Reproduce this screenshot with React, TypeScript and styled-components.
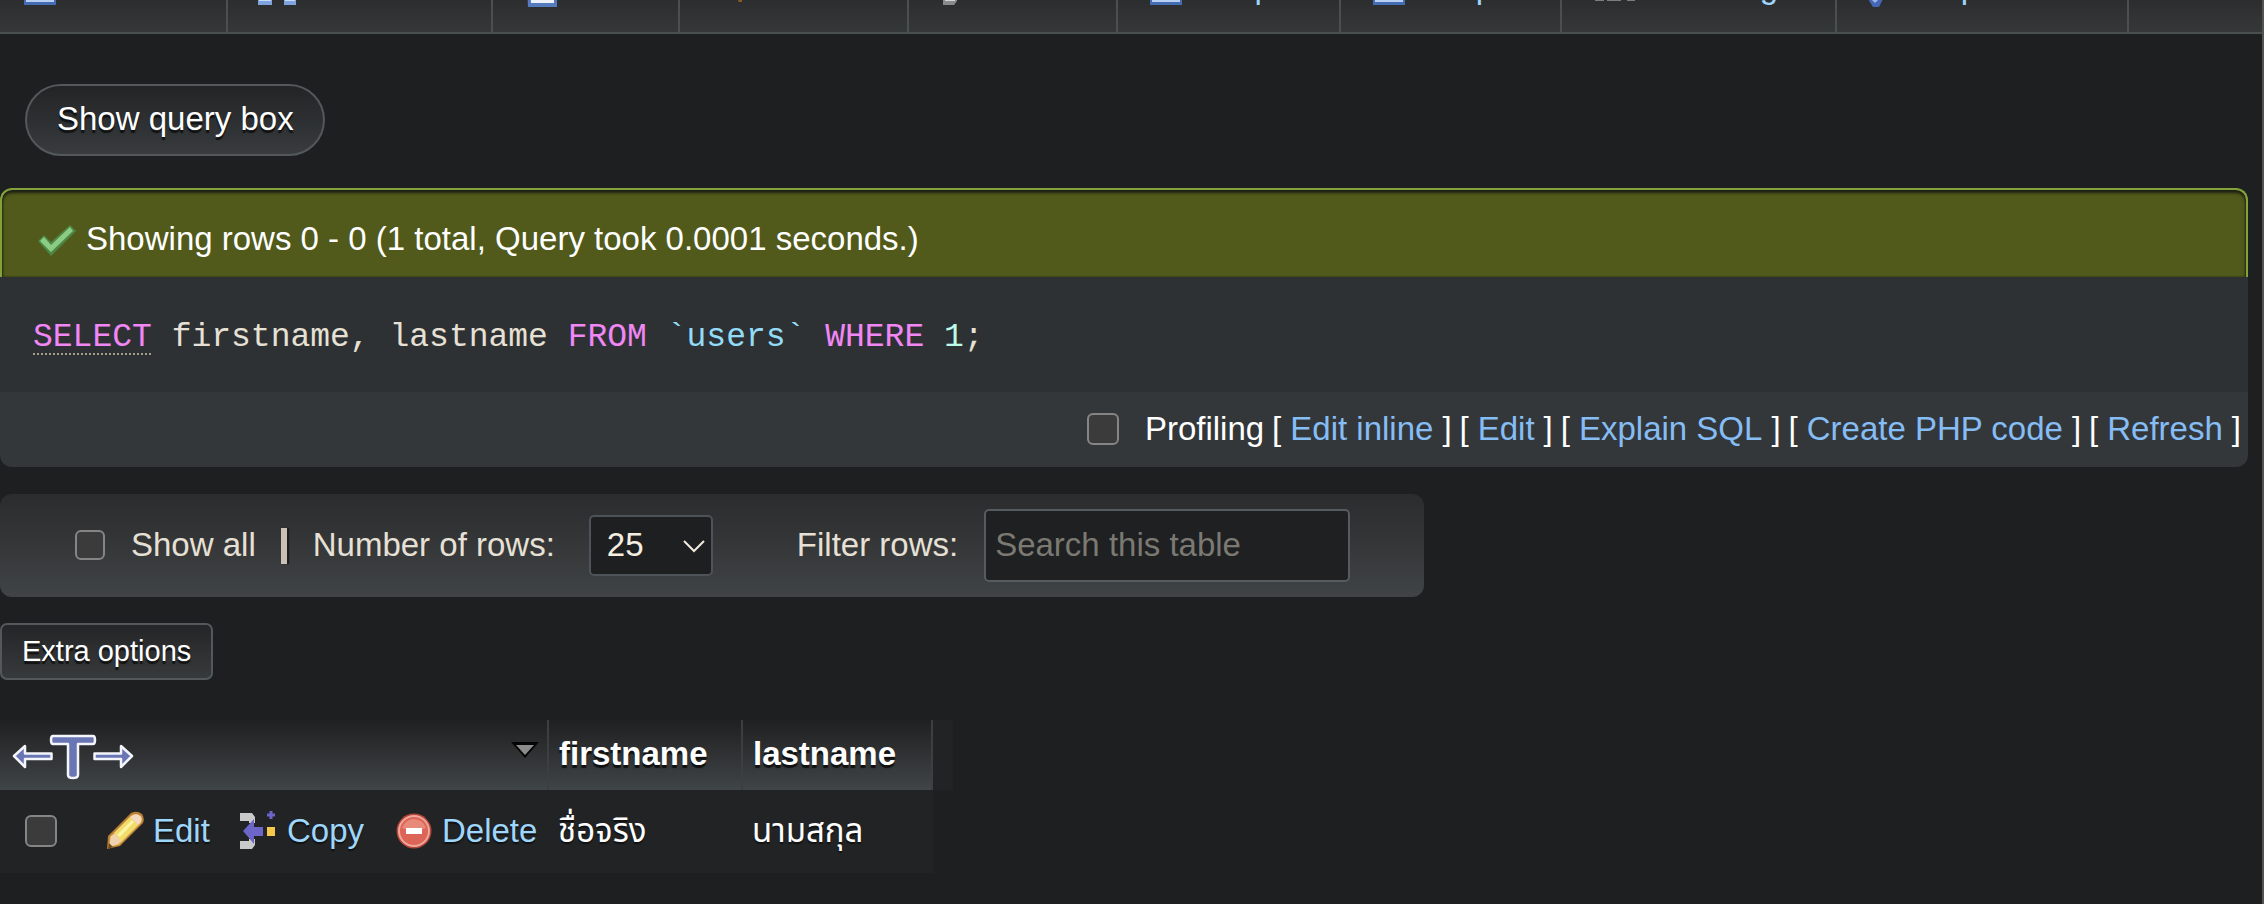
import React from "react";
import styled, { createGlobalStyle } from "styled-components";

const GlobalStyle = createGlobalStyle`
  *, *::before, *::after { box-sizing: border-box; }
  body {
    margin: 0;
    background: #1e1f21;
    color: #ffffff;
    font-family: "Liberation Sans", Arial, "Noto Sans Thai", "Noto Sans", sans-serif;
    font-size: 33px;
    line-height: 40px;
  }
  button, input, select { font: inherit; color: inherit; }
`;

const Page = styled.div`
  min-height: 100vh;
  border-right: 2px solid #555351;
`;

const TabBar = styled.nav`
  display: flex;
  align-items: flex-end;
  height: 34px;
  overflow: hidden;
  background: linear-gradient(#2c2d2f, #353839);
  border-bottom: 2px solid #4a504f;
`;

const Tab = styled.a<{ $width: number; $first?: boolean }>`
  display: flex;
  flex: 0 0 ${(p) => p.$width}px;
  align-items: center;
  gap: 32px;
  height: 90px;
  padding: 25px 0 25px ${(p) => (p.$first ? 22 : 30)}px;
  border-right: 2px solid #4b4f50;
  color: #9fd4fb;
  text-decoration: none;
  white-space: nowrap;
  svg { flex: none; }
`;

const Main = styled.main`
  display: flex;
  flex-direction: column;
  align-items: flex-start;
  padding: 50px 14px 30px 0;
`;

const PillButton = styled.button`
  height: 72px;
  margin: 0 0 32px 25px;
  padding: 0 29px 2px 30px;
  border: 2px solid #53585b;
  border-radius: 36px;
  background: linear-gradient(#232426, #2f3234 60%, #393b3d);
  color: #ffffff;
  text-shadow: 0 3px 1px #111111;
`;

const Result = styled.section`
  width: 100%;
  margin-bottom: 27px;
`;

const SuccessMessage = styled.div`
  display: flex;
  align-items: center;
  gap: 8px;
  padding: 29px 34px 18px;
  border: 2px solid #83a33a;
  border-bottom: 0;
  border-radius: 12px 12px 0 0;
  background: #515a1a;
  box-shadow: inset 0 3px 3px #1e1f14, inset 1px 0 2px #333a14, inset -1px 0 2px #333a14;
`;

const Query = styled.pre`
  margin: 0;
  padding: 41px 33px 34px;
  background: #2e3134;
  color: #e7e1d5;
  font-family: "Liberation Mono", "Courier New", monospace;
`;

const Keyword = styled.span`
  color: #f087f5;
`;

const DocLink = styled.a`
  color: #f087f5;
  text-decoration: underline dotted 2px #a39d8a;
  text-underline-offset: 7px;
`;

const Identifier = styled.span`
  color: #93dcf8;
`;

const NumberLiteral = styled.span`
  color: #bdfbe9;
`;

const QueryTools = styled.div`
  display: flex;
  align-items: center;
  justify-content: flex-end;
  gap: 8px;
  height: 75px;
  padding: 0 7px 2px 0;
  border-radius: 0 0 12px 12px;
  background: #34373a;
`;

const Bracketed = styled.span`
  display: flex;
  gap: 9px;
`;

const ToolLink = styled.a`
  color: #85bdf4;
  text-decoration: none;
`;

const CheckLabel = styled.label`
  display: flex;
  align-items: center;
  gap: 26px;
`;

const Checkbox = styled.input.attrs({ type: "checkbox" })<{ $size?: number }>`
  appearance: none;
  display: block;
  flex: none;
  width: ${(p) => p.$size ?? 32}px;
  height: ${(p) => p.$size ?? 32}px;
  margin: 0;
  border: 2px solid #858585;
  border-radius: 6px;
  background: #3b3b3b;
`;

const Filters = styled.form`
  display: flex;
  align-items: center;
  gap: 26px;
  height: 103px;
  margin-bottom: 26px;
  padding: 0 74px 0 75px;
  border-radius: 12px;
  background: linear-gradient(#2a2c2e, #323335 35%, #37393b 60%, #404446);
  color: #e7e0d5;
  label { padding-bottom: 2px; }
`;

const Divider = styled.span`
  width: 6px;
  height: 36px;
  margin-left: -1px;
  background: #cac0b4;
  box-shadow: 2px 0 1px #1d1e20;
`;

const RowsField = styled.div`
  display: flex;
  align-items: center;
  gap: 34px;
  margin-right: 58px;
`;

const SelectBox = styled.div`
  display: grid;
  align-items: center;
  justify-items: end;
  > * { grid-area: 1 / 1; }
  svg { margin-right: 8px; pointer-events: none; }
`;

const Select = styled.select`
  appearance: none;
  width: 124px;
  height: 61px;
  padding: 0 16px 2px;
  border: 2px solid #4d5358;
  border-radius: 5px;
  background: #1e1f21;
  color: #f5efe2;
`;

const SearchInput = styled.input`
  width: 366px;
  height: 73px;
  padding: 0 9px 2px;
  border: 2px solid #555b5f;
  border-radius: 5px;
  background: #1e2022;
  &::placeholder { color: #7b7972; opacity: 1; }
`;

const SmallButton = styled.button`
  height: 57px;
  margin-bottom: 40px;
  padding: 0 20px 2px;
  border: 2px solid #53595b;
  border-radius: 7px;
  background: linear-gradient(#242527, #373a3b);
  color: #ffffff;
  font-size: 29px;
  text-shadow: 0 3px 1px #111111;
`;

const ResultTable = styled.table`
  table-layout: fixed;
  width: 953px;
  border-spacing: 0;
`;

const HeadCell = styled.th`
  height: 70px;
  padding: 0 0 2px 10px;
  border-right: 2px solid #3d3e40;
  background: linear-gradient(#1f2022, #303234 50%, #404548);
  text-align: left;
  text-shadow: 0 3px 1px #111111;
`;

const ActionHead = styled(HeadCell)`
  padding: 0;
`;

const EndCell = styled.td`
  padding: 0;
  background: #222325;
`;

const ActionHeadContent = styled.div`
  display: flex;
  align-items: flex-start;
  justify-content: space-between;
  height: 70px;
  padding: 14px 8px 0 12px;
`;

const SortArrow = styled.svg`
  margin-top: 7px;
`;

const Cell = styled.td<{ $indent?: number }>`
  height: 83px;
  padding: 0 0 2px ${(p) => p.$indent ?? 0}px;
  background: #222325;
  text-shadow: 0 2px 1px #111111;
`;

const ActionLink = styled.a`
  display: flex;
  align-items: center;
  gap: 9px;
  color: #9fd6fb;
  text-decoration: none;
`;

const PageIcon = () => (
  <svg width="36" height="36" viewBox="0 0 36 36" aria-hidden="true">
    <path d="M2 2h32v34H2z" fill="#dce8fa" />
    <path d="M2 28h32v8H2z" fill="#446db4" />
    <path d="M4 27h28v6H4z" fill="#b9d0f3" />
  </svg>
);

const StructureIcon = () => (
  <svg width="40" height="36" viewBox="0 0 40 36" aria-hidden="true">
    <path d="M0 6h14v30H0zM26 6h12v30H26z" fill="#7fa3dc" />
    <path d="M1 24h12v8H1zM27 24h10v8H27z" fill="#c7daf7" />
  </svg>
);

const SqlIcon = () => (
  <svg width="36" height="40" viewBox="0 0 36 40" aria-hidden="true">
    <path d="M3 2h31v38H5z" fill="#537bbd" />
    <path d="M6 4h25v32H8z" fill="#eef3fb" />
  </svg>
);

const SearchIcon = () => (
  <svg width="36" height="36" viewBox="0 0 36 36" aria-hidden="true">
    <circle cx="16" cy="14" r="10" fill="none" stroke="#8fa9cf" strokeWidth="4" />
    <path d="M22 21l10 10v2h-3z" fill="#8a5a25" />
  </svg>
);

const InsertIcon = () => (
  <svg width="36" height="36" viewBox="0 0 36 36" aria-hidden="true">
    <path d="M4 6h30v8H18v18l-3 4H4z" fill="#8a8a8a" />
    <path d="M6 8h10v24H6z" fill="#d5d5d5" />
  </svg>
);

const PrivilegesIcon = () => (
  <svg width="46" height="32" viewBox="0 0 46 32" aria-hidden="true">
    <path d="M3 8h9v22H3zM15 8h14v22H15zM35 8h8v22h-8z" fill="#7d7d7d" />
  </svg>
);

const WrenchIcon = () => (
  <svg width="36" height="40" viewBox="0 0 36 40" aria-hidden="true">
    <path d="M1 26h15v6l-4 8H6l-5-8z" fill="#4467b5" />
    <path d="M4 26h8v6l-4 4-4-4z" fill="#9eb6e8" />
  </svg>
);

const CheckIcon = () => (
  <svg width="42" height="36" viewBox="0 0 42 36" aria-hidden="true">
    <path d="M2 20l6-6 7 7L34 4l6 6-25 25z" fill="#4d8746" />
    <path d="M4 20l4-4 7 8L34 6l3 4-22 21z" fill="#8ccb83" />
  </svg>
);

const TransformIcon = () => (
  <svg width="122" height="46" viewBox="0 0 122 46" aria-hidden="true">
    <g fill="#6a76b4" stroke="#f4f5fb" strokeWidth="2.5" strokeLinejoin="round">
      <path d="M2 22l11-10v7.500h26.500v5.500H13v8z" />
      <path d="M120 22l-11-10v7.500H82.500v5.500H109v8z" />
      <path d="M41 2h40q2 0 2 4t-2 4H66v31q0 3-5 3T56 41V10H41q-2 0-2-4t2-4z" />
    </g>
  </svg>
);

const PencilIcon = () => (
  <svg width="38" height="40" viewBox="0 0 38 40" aria-hidden="true">
    <path d="M1 38l1-13L25 2q6-3 11 1 3 4 1 9L14 35z" fill="#b97e35" />
    <path d="M3 36l1-10L26 4q5-2 9 1 2 3 0 7L13 34z" fill="#e7b55c" />
    <path d="M8 22L24 6l8 8-17 17z" fill="#f1dc6a" />
    <path d="M11 24L26 9l2 2-14 15z" fill="#fbf3a6" />
    <path d="M24 6l3-2q4-2 7 1 3 3 0 7l-2 2z" fill="#f3d9bf" />
    <path d="M3 36l2-11 4-2 6 7-3 3z" fill="#f0d3ae" />
    <path d="M2 38l1-6 4 4z" fill="#6d4a20" />
  </svg>
);

const CopyIcon = () => (
  <svg width="38" height="40" viewBox="0 0 38 40" aria-hidden="true">
    <path d="M0 2h12l3 4v6H9v-2H0zM0 38h12l3-4v-6H9v2H0z" fill="#c9c9c9" />
    <path d="M3 20L14 8v8h9v9h-9v8z" fill="#6b66c8" />
    <path d="M31 0v8M27 4h8" stroke="#6b66c8" strokeWidth="3" />
    <path d="M27 16h8v9h-8z" fill="#f6c84c" />
  </svg>
);

const DeleteIcon = () => (
  <svg width="38" height="40" viewBox="0 0 38 40" aria-hidden="true">
    <circle cx="19" cy="20" r="17.500" fill="#b34638" />
    <circle cx="19" cy="20" r="15" fill="#dc6558" stroke="#f0a79c" strokeWidth="2" />
    <path d="M7 17a12.500 12.500 0 0 1 24 0q-12 5-24 0z" fill="#e88a79" />
    <path d="M11 17h16v6H11z" fill="#ffffff" />
  </svg>
);

const tabs = [
  { label: "Browse", width: 228, icon: <PageIcon />, iconOnly: true },
  { label: "Structure", width: 265, icon: <StructureIcon />, iconOnly: true },
  { label: "SQL", width: 187, icon: <SqlIcon />, iconOnly: true },
  { label: "Search", width: 229, icon: <SearchIcon />, iconOnly: true },
  { label: "Insert", width: 209, icon: <InsertIcon />, iconOnly: true },
  { label: "Export", width: 223, icon: <PageIcon /> },
  { label: "Import", width: 221, icon: <PageIcon /> },
  { label: "Privileges", width: 275, icon: <PrivilegesIcon /> },
  { label: "Operations", width: 292, icon: <WrenchIcon /> },
];

const tools = ["Edit inline", "Edit", "Explain SQL", "Create PHP code", "Refresh"];

export default function App() {
  return (
    <>
      <GlobalStyle />
      <Page>
        <TabBar>
          {tabs.map((tab, i) => (
            <Tab key={tab.label} href="#" aria-label={tab.label} $width={tab.width} $first={i === 0}>
              {tab.icon}
              {!tab.iconOnly && tab.label}
            </Tab>
          ))}
        </TabBar>
        <Main>
          <PillButton type="button">Show query box</PillButton>

          <Result>
            <SuccessMessage role="status">
              <CheckIcon />
              Showing rows 0 - 0 (1 total, Query took 0.0001 seconds.)
            </SuccessMessage>
            <Query>
              <DocLink href="#">SELECT</DocLink> firstname, lastname <Keyword>FROM</Keyword>{" "}
              <Identifier>`users`</Identifier> <Keyword>WHERE</Keyword> <NumberLiteral>1</NumberLiteral>;
            </Query>
            <QueryTools>
              <CheckLabel>
                <Checkbox />
                Profiling
              </CheckLabel>
              {tools.map((tool) => (
                <Bracketed key={tool}>
                  <span>[</span>
                  <ToolLink href="#">{tool}</ToolLink>
                  <span>]</span>
                </Bracketed>
              ))}
            </QueryTools>
          </Result>

          <Filters>
            <CheckLabel>
              <Checkbox $size={30} />
              Show all
            </CheckLabel>
            <Divider />
            <RowsField>
              <label htmlFor="row-count">Number of rows:</label>
              <SelectBox>
                <Select id="row-count" defaultValue="25">
                  <option>25</option>
                </Select>
                <svg width="22" height="14" viewBox="0 0 22 14" aria-hidden="true">
                  <path d="M1 2l10 10L21 2" fill="none" stroke="#f0eadf" strokeWidth="2" />
                </svg>
              </SelectBox>
            </RowsField>
            <label htmlFor="row-filter">Filter rows:</label>
            <SearchInput id="row-filter" type="text" placeholder="Search this table" />
          </Filters>

          <SmallButton type="button">Extra options</SmallButton>

          <ResultTable>
            <colgroup>
              <col width="106" />
              <col width="134" />
              <col width="155" />
              <col width="154" />
              <col width="194" />
              <col width="190" />
              <col width="20" />
            </colgroup>
            <thead>
              <tr>
                <ActionHead colSpan={4}>
                  <ActionHeadContent>
                    <TransformIcon />
                    <SortArrow width="28" height="17" viewBox="0 0 28 17" aria-hidden="true">
                      <path d="M0 1h28L14 17z" fill="#050505" />
                      <path d="M5 4h18l-9 10z" fill="#8c8c8c" />
                    </SortArrow>
                  </ActionHeadContent>
                </ActionHead>
                <HeadCell>firstname</HeadCell>
                <HeadCell>lastname</HeadCell>
                <EndCell />
              </tr>
            </thead>
            <tbody>
              <tr>
                <Cell $indent={25}>
                  <Checkbox aria-label="Select row" />
                </Cell>
                <Cell>
                  <ActionLink href="#">
                    <PencilIcon />
                    Edit
                  </ActionLink>
                </Cell>
                <Cell>
                  <ActionLink href="#">
                    <CopyIcon />
                    Copy
                  </ActionLink>
                </Cell>
                <Cell>
                  <ActionLink href="#">
                    <DeleteIcon />
                    Delete
                  </ActionLink>
                </Cell>
                <Cell $indent={9}>ชื่อจริง</Cell>
                <Cell $indent={9}>นามสกุล</Cell>
              </tr>
            </tbody>
          </ResultTable>
        </Main>
      </Page>
    </>
  );
}
